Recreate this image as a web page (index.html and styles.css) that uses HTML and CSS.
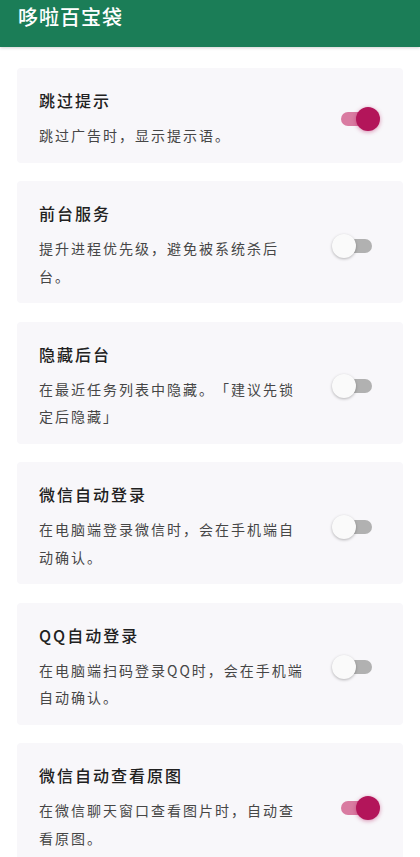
FILE: index.html
```html
<!DOCTYPE html>
<html lang="zh-CN">
<head>
<meta charset="utf-8">
<title>哆啦百宝袋</title>
<link rel="stylesheet" href="styles.css">
</head>
<body>
<header class="appbar"><h1 class="appbar-title">哆啦百宝袋</h1></header>
<main class="list">
  <section class="card">
    <div class="card-text">
      <h2 class="card-title">跳过提示</h2>
      <p class="card-desc">跳过广告时，显示提示语。</p>
    </div>
    <span class="switch on"></span>
  </section>
  <section class="card">
    <div class="card-text">
      <h2 class="card-title">前台服务</h2>
      <p class="card-desc">提升进程优先级，避免被系统杀后台。</p>
    </div>
    <span class="switch"></span>
  </section>
  <section class="card">
    <div class="card-text">
      <h2 class="card-title">隐藏后台</h2>
      <p class="card-desc">在最近任务列表中隐藏。「建议先锁定后隐藏」</p>
    </div>
    <span class="switch"></span>
  </section>
  <section class="card">
    <div class="card-text">
      <h2 class="card-title">微信自动登录</h2>
      <p class="card-desc">在电脑端登录微信时，会在手机端自动确认。</p>
    </div>
    <span class="switch"></span>
  </section>
  <section class="card">
    <div class="card-text">
      <h2 class="card-title">QQ自动登录</h2>
      <p class="card-desc">在电脑端扫码登录QQ时，会在手机端自动确认。</p>
    </div>
    <span class="switch"></span>
  </section>
  <section class="card">
    <div class="card-text">
      <h2 class="card-title">微信自动查看原图</h2>
      <p class="card-desc">在微信聊天窗口查看图片时，自动查看原图。</p>
    </div>
    <span class="switch on"></span>
  </section>
</main>
</body>
</html>
```
FILE: styles.css
```css
html, body {
  margin: 0;
  padding: 0;
  background: #ffffff;
}
body {
  font-family: "Noto Sans CJK SC", "Noto Sans", sans-serif;
  width: 420px;
  overflow-x: hidden;
  text-spacing-trim: space-all;
}
.appbar {
  height: 47px;
  background: #1b7d57;
  box-shadow: 0 1px 3px rgba(0, 0, 0, 0.18);
  display: flex;
  align-items: center;
  padding: 0 18px;
  box-sizing: border-box;
}
.appbar-title {
  margin: 0;
  margin-top: -13px;
  font-size: 20px;
  font-weight: 500;
  color: #ffffff;
  letter-spacing: 1px;
  line-height: 28px;
}
.list {
  display: flex;
  flex-direction: column;
  gap: 18.5px;
  padding: 21px 17px 20px;
}
.card {
  background: #f8f7fa;
  border-radius: 4px;
  display: flex;
  align-items: center;
  padding: 20px 23px 13px 22px;
}
.card-text {
  flex: 0 0 268px;
}
.card-title {
  margin: 0;
  font-size: 16px;
  font-weight: 500;
  line-height: 24px;
  letter-spacing: 2px;
  color: #212121;
}
.card-desc {
  margin: 10px 0 0;
  font-size: 14px;
  line-height: 27.5px;
  letter-spacing: 2px;
  color: #464646;
  text-spacing-trim: space-all;
}
.switch {
  position: relative;
  margin-left: auto;
  width: 48px;
  height: 24px;
  flex: 0 0 48px;
}
.switch::before {
  content: "";
  position: absolute;
  left: 9px;
  top: 5px;
  width: 31px;
  height: 14px;
  border-radius: 7px;
  background: #b1b1b1;
}
.switch::after {
  content: "";
  position: absolute;
  left: 0;
  top: 0;
  width: 24px;
  height: 24px;
  border-radius: 50%;
  background: #fafafa;
  box-shadow: 0 1px 3px rgba(0, 0, 0, 0.28);
}
.switch.on::before {
  background: #d97ba1;
}
.switch.on::after {
  left: 24px;
  background: #b3155a;
  box-shadow: 0 1px 4px rgba(179, 21, 90, 0.45);
}
```
